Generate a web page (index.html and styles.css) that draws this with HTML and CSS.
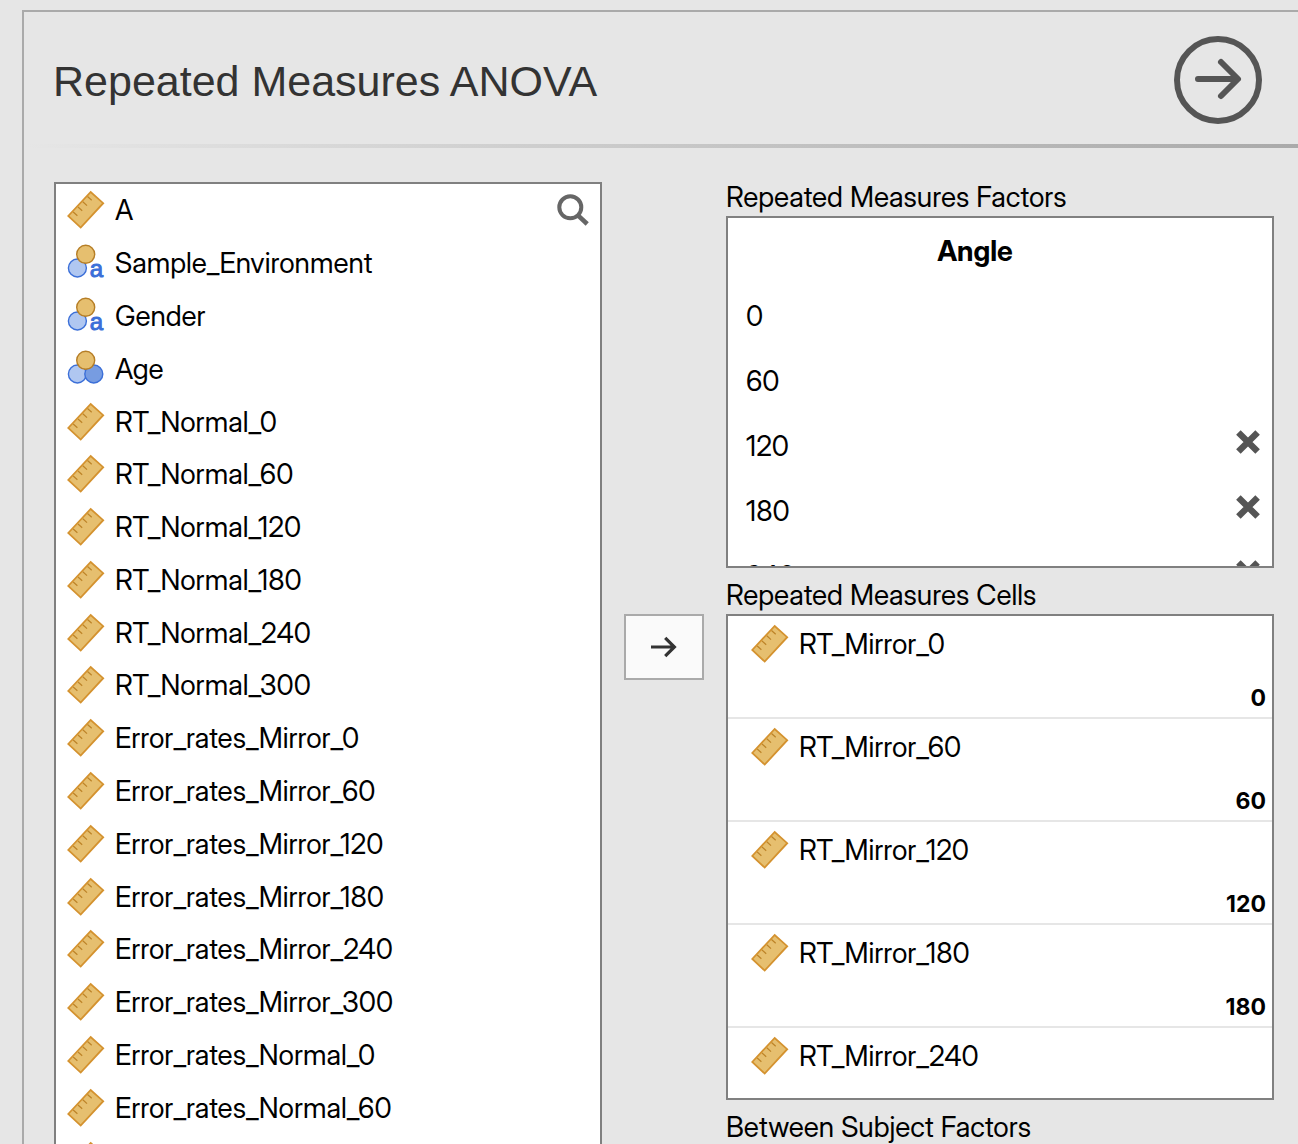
FILE: index.html
```html
<!DOCTYPE html>
<html lang="en">
<head>
<meta charset="utf-8">
<title>Repeated Measures ANOVA</title>
<link rel="stylesheet" href="styles.css">
</head>
<body>
<svg class="defs" aria-hidden="true">
  <symbol id="scale" viewBox="0 0 38 40">
    <path d="M1.2 26 23.7 2 36.2 13.2 13.7 37.6Z" fill="#e6bf6f" stroke="#d4922f" stroke-width="1.8"/>
    <path d="M20.5 6.5l4.2 3.8M15.8 11.8l4.2 3.8M11 17l4.2 3.8M6.2 22l4.2 3.8" stroke="#bd8328" stroke-width="1.2"/>
  </symbol>
  <symbol id="nominal-text" viewBox="0 0 38 40">
    <circle cx="10.4" cy="25" r="9" fill="#b0c7f1" stroke="#3b6fd8" stroke-width="1.4"/>
    <circle cx="18.7" cy="11.3" r="9" fill="#e6bf6f" stroke="#b67e26" stroke-width="1.4"/>
    <text class="glyph" x="22.8" y="33.6">a</text>
  </symbol>
  <symbol id="nominal" viewBox="0 0 38 40">
    <circle cx="10.4" cy="25" r="9" fill="#b0c7f1" stroke="#3b6fd8" stroke-width="1.4"/>
    <circle cx="26.8" cy="25" r="9" fill="#779ce1" stroke="#3b6fd8" stroke-width="1.4"/>
    <circle cx="18.7" cy="11.3" r="9" fill="#e6bf6f" stroke="#b67e26" stroke-width="1.4"/>
  </symbol>
  <symbol id="cross" viewBox="0 0 24 24">
    <path d="M2.4 2.4 21.6 21.6M21.6 2.4 2.4 21.6" stroke="#555" stroke-width="6.4"/>
  </symbol>
</svg>
<main class="panel">
  <header class="header">
    <h1 class="title">Repeated Measures ANOVA</h1>
    <button class="close" type="button" aria-label="Hide options">
      <svg width="88" height="88" viewBox="0 0 88 88" fill="none" stroke="#555" stroke-width="6">
        <circle cx="44" cy="44" r="41"/>
        <path d="M24 43H62M47 26 64 43 47 60" stroke-linecap="round" stroke-linejoin="round"/>
      </svg>
    </button>
  </header>
  <div class="rule"></div>
  <div class="content">
    <section class="supplier" aria-label="Variables">
      <ul class="variables">
        <li><svg class="icon"><use href="#scale"/></svg>A</li>
        <li><svg class="icon"><use href="#nominal-text"/></svg>Sample_Environment</li>
        <li><svg class="icon"><use href="#nominal-text"/></svg>Gender</li>
        <li><svg class="icon"><use href="#nominal"/></svg>Age</li>
        <li><svg class="icon"><use href="#scale"/></svg>RT_Normal_0</li>
        <li><svg class="icon"><use href="#scale"/></svg>RT_Normal_60</li>
        <li><svg class="icon"><use href="#scale"/></svg>RT_Normal_120</li>
        <li><svg class="icon"><use href="#scale"/></svg>RT_Normal_180</li>
        <li><svg class="icon"><use href="#scale"/></svg>RT_Normal_240</li>
        <li><svg class="icon"><use href="#scale"/></svg>RT_Normal_300</li>
        <li><svg class="icon"><use href="#scale"/></svg>Error_rates_Mirror_0</li>
        <li><svg class="icon"><use href="#scale"/></svg>Error_rates_Mirror_60</li>
        <li><svg class="icon"><use href="#scale"/></svg>Error_rates_Mirror_120</li>
        <li><svg class="icon"><use href="#scale"/></svg>Error_rates_Mirror_180</li>
        <li><svg class="icon"><use href="#scale"/></svg>Error_rates_Mirror_240</li>
        <li><svg class="icon"><use href="#scale"/></svg>Error_rates_Mirror_300</li>
        <li><svg class="icon"><use href="#scale"/></svg>Error_rates_Normal_0</li>
        <li><svg class="icon"><use href="#scale"/></svg>Error_rates_Normal_60</li>
        <li><svg class="icon"><use href="#scale"/></svg></li>
      </ul>
      <button class="search" type="button" aria-label="Search variables">
        <svg width="34" height="34" viewBox="0 0 34 34" fill="none" stroke="#666">
          <circle cx="14.3" cy="14.3" r="11" stroke-width="4"/>
          <path d="M22 22.4 31.2 31" stroke-width="4.6"/>
        </svg>
      </button>
    </section>
    <button class="move" type="button" aria-label="Move to Repeated Measures Cells">
      <svg width="28" height="22" viewBox="0 0 28 22" fill="none" stroke="#333" stroke-width="3.2">
        <path d="M1 11H25M15.2 1.8 24.4 11 15.2 20.2"/>
      </svg>
    </button>
    <div class="targets">
      <section>
        <h2 class="label">Repeated Measures Factors</h2>
        <div class="box factors">
          <h3 class="factor-name">Angle</h3>
          <ul class="levels">
            <li>0</li>
            <li>60</li>
            <li>120<button class="remove" type="button" aria-label="Remove 120"><svg><use href="#cross"/></svg></button></li>
            <li>180<button class="remove" type="button" aria-label="Remove 180"><svg><use href="#cross"/></svg></button></li>
            <li>240<button class="remove" type="button" aria-label="Remove 240"><svg><use href="#cross"/></svg></button></li>
          </ul>
        </div>
      </section>
      <section>
        <h2 class="label">Repeated Measures Cells</h2>
        <ul class="box cells">
          <li><span class="variable"><svg class="icon"><use href="#scale"/></svg>RT_Mirror_0</span><b class="level">0</b></li>
          <li><span class="variable"><svg class="icon"><use href="#scale"/></svg>RT_Mirror_60</span><b class="level">60</b></li>
          <li><span class="variable"><svg class="icon"><use href="#scale"/></svg>RT_Mirror_120</span><b class="level">120</b></li>
          <li><span class="variable"><svg class="icon"><use href="#scale"/></svg>RT_Mirror_180</span><b class="level">180</b></li>
          <li><span class="variable"><svg class="icon"><use href="#scale"/></svg>RT_Mirror_240</span></li>
        </ul>
      </section>
      <section>
        <h2 class="label">Between Subject Factors</h2>
      </section>
    </div>
  </div>
</main>
</body>
</html>
```
FILE: styles.css
```css
* {
  box-sizing: border-box;
}

body {
  margin: 0;
  height: 100vh;
  overflow: hidden;
  padding: 10px 0 0 22px;
  background: #e6e6e6;
  color: #000;
  font: 28px/34px "Inter Display", Inter, "Liberation Sans", sans-serif;
}

h1, h2, h3, ul {
  margin: 0;
  padding: 0;
  font-size: inherit;
  font-weight: inherit;
  list-style: none;
}

button {
  display: flex;
  align-items: center;
  justify-content: center;
  padding: 0;
  border: 0;
  background: none;
}

svg {
  display: block;
  flex: none;
}

.defs {
  position: absolute;
  width: 0;
  height: 0;
}

.glyph {
  font: 24px "Liberation Sans", sans-serif;
  fill: #3b6fd8;
  stroke: #3b6fd8;
  stroke-width: 1px;
}

.panel {
  border-top: 2px solid #aaa;
  border-left: 2px solid #aaa;
}

.header {
  display: flex;
  align-items: center;
  justify-content: space-between;
  height: 132px;
  padding: 4px 36px 0 29px;
}

.title {
  padding-top: 2px;
  color: #333;
  font: 43px/48px "Liberation Sans", Arial, sans-serif;
}

.rule {
  height: 4px;
  background: linear-gradient(to right, #e6e6e6, #aaa);
}

.content {
  display: grid;
  grid-template-columns: 1fr 80px 1fr;
  align-items: start;
  gap: 22px;
  padding: 32px 24px 0 30px;
}

.supplier {
  position: relative;
  margin-top: 2px;
  border: 2px solid #808080;
  background: #fff;
}

.variables {
  display: grid;
  grid-auto-rows: 1fr;
  height: 1003px;
}

.variables li,
.variable {
  display: flex;
  align-items: center;
  gap: 10px;
  padding-left: 11px;
}

.icon {
  width: 38px;
  height: 40px;
}

.search {
  position: absolute;
  top: 9px;
  right: 10px;
}

.move {
  height: 66px;
  margin-top: 434px;
  border: 2px solid #aaa;
  background: #fafafa;
}

.targets {
  display: grid;
  gap: 10px;
}

.label {
  padding-bottom: 2px;
}

.box {
  overflow: hidden;
  border: 2px solid #808080;
  background: #fff;
}

.factors {
  height: 352px;
  padding-top: 1px;
}

.factor-name {
  padding-right: 50px;
  font-weight: 700;
  line-height: 65px;
  text-align: center;
}

.levels li {
  display: flex;
  justify-content: space-between;
  height: 65px;
  padding: 0 12px 0 18px;
  line-height: 65px;
}

.remove {
  height: 56px;
}

.remove svg {
  width: 24px;
  height: 24px;
}

.cells {
  height: 486px;
}

.cells li {
  display: flex;
  flex-direction: column;
  justify-content: space-between;
  height: 103px;
  padding-top: 8px;
  border-bottom: 2px solid #e6e6e6;
}

.variable {
  padding-left: 23px;
}

.level {
  padding-right: 6px;
  font-family: Inter, "Liberation Sans", sans-serif;
  font-size: 23px;
  line-height: 38px;
  text-align: right;
}
```
